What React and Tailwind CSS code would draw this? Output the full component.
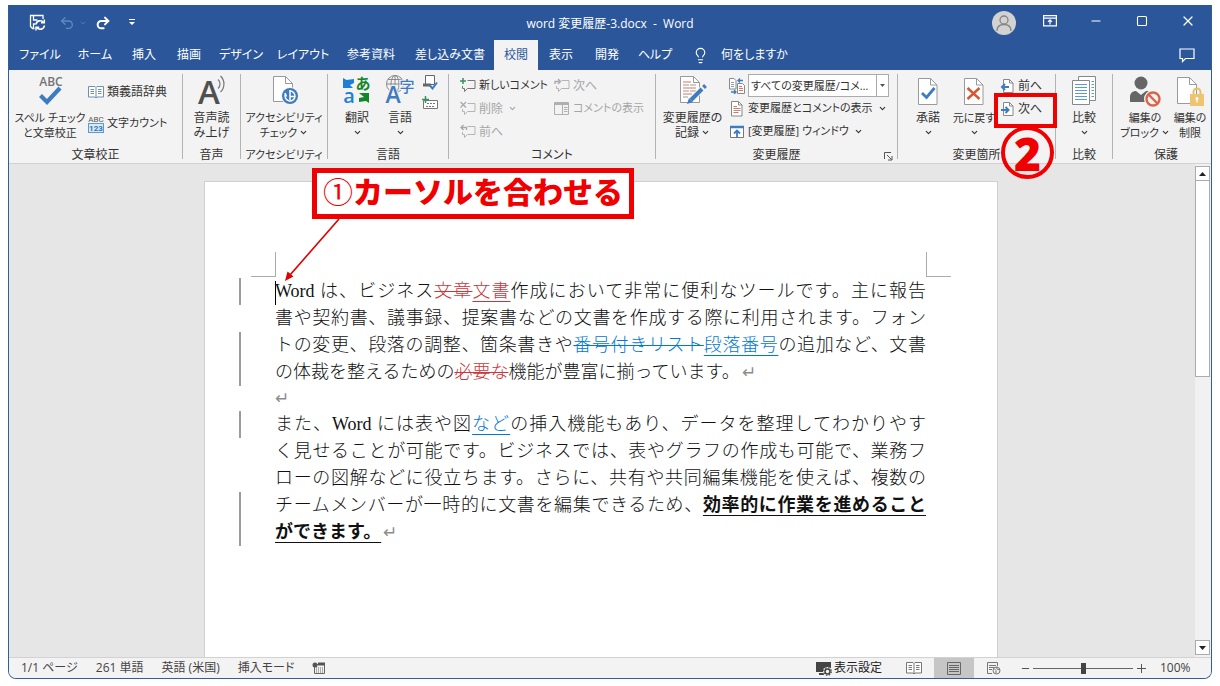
import React, { useState } from 'react';
import { ChevronDown, Undo2, Redo2, Minus, Square, X, Lightbulb } from 'lucide-react';

const TABS = [
    { label: 'ファイル', width: 'w-[56px]' },
    { label: 'ホーム', width: 'w-[54px]' },
    { label: '挿入', width: 'w-[44px]' },
    { label: '描画', width: 'w-[46px]' },
    { label: 'デザイン', width: 'w-[58px]' },
    { label: 'レイアウト', width: 'w-[66px]' },
    { label: '参考資料', width: 'w-[70px]' },
    { label: '差し込み文書', width: 'w-[88px]' },
    { label: '校閲', width: 'w-[44px]' },
    { label: '表示', width: 'w-[46px]' },
    { label: '開発', width: 'w-[46px]' },
    { label: 'ヘルプ', width: 'w-[50px]' },
];

/* ---------- icons ---------- */

const SaveIcon = () => (
    <svg width="18" height="18" viewBox="0 0 18 18" fill="none" stroke="white" strokeWidth="1.3">
        <path d="M5.500 14.500H3.500L1.500 12.500V1.500h12.500V5M4.500 1.500V6h4M4.500 14V10h2" />
        <path d="M7 10.500a4.200 4.200 0 0 1 7.600-2M15.400 11.500a4.200 4.200 0 0 1-7.600 2" strokeWidth="1.600" />
        <path d="M15.300 5.500v3.300H12M7 16.500v-3.300h3.200" strokeWidth="1.500" />
    </svg>
);

const RibbonOptionsIcon = () => (
    <svg width="14" height="12" viewBox="0 0 14 12" fill="none" stroke="white" strokeWidth="1.2">
        <path d="M.6.6h12.8v10.2H.6zM.6 3.2h12.8M7 9.5V5M5 6.8l2-2 2 2" />
    </svg>
);

const SpeechIcon = () => (
    <svg width="16" height="15" viewBox="0 0 16 15" fill="none" stroke="white" strokeWidth="1.2">
        <path d="M1 1h14v9.500H6.500L3.500 13.500v-3H1z" />
    </svg>
);

const SpellIcon = () => (
    <svg width="34" height="34" viewBox="0 0 34 34" className="overflow-visible">
        <text x="18" y="12" textAnchor="middle" fontSize="12" fontWeight="600" fill="#737373" fontFamily="Open Sans, sans-serif">ABC</text>
        <path d="M7.500 21.500l6.500 6.500L27 14" fill="none" stroke="#3f7cbf" strokeWidth="4.200" />
    </svg>
);

const BookIcon = ({ color = '#6f8fb5' }) => (
    <svg width="16" height="14" viewBox="0 0 16 14" fill="none" stroke={color}>
        <path d="M.5 1.500h6.500l1 1 1-1h6.500v10.500h-6.500l-1 1-1-1H.5zM8 2.500V13" fill="#fff" />
        <path d="M2.500 4.500H6M2.500 6.500H6M2.500 8.500H6M10 4.500h3.500M10 6.500h3.500M10 8.500h3.500" />
    </svg>
);

const CountIcon = () => (
    <svg width="16" height="18" viewBox="0 0 16 18" fontFamily="Roboto, sans-serif" className="overflow-visible">
        <text x="8" y="7" textAnchor="middle" fontSize="8" fill="#555">ABC</text>
        <rect x=".5" y="8.500" width="15" height="9" fill="#dbe8f6" stroke="#5b9bd5" />
        <text x="8" y="16" textAnchor="middle" fontSize="8" fontWeight="700" fill="#2e75b6">123</text>
    </svg>
);

const ReadAloudIcon = () => (
    <svg width="32" height="32" viewBox="0 0 32 32" className="overflow-visible">
        <text x="13" y="30" textAnchor="middle" fontSize="33" fontWeight="600" fill="#505050" fontFamily="Open Sans, sans-serif">A</text>
        <path d="M22 5.500a6 6 0 0 1 0 9M24.500 2a11 11 0 0 1 0 16" fill="none" stroke="#777" strokeWidth="1.200" />
    </svg>
);

const AccessibilityIcon = () => (
    <svg width="32" height="32" viewBox="0 0 32 32" fill="none">
        <path d="M5.500 2.500h12l7 7v18h-19z" fill="#fff" stroke="#9a9a9a" />
        <path d="M17.500 2.500v7h7" stroke="#9a9a9a" />
        <circle cx="22" cy="22" r="9" fill="#f3f3f3" />
        <circle cx="22" cy="22" r="8" fill="#3f7cbf" />
        <path d="M22 17a5 5 0 1 1-4.700 3.300" stroke="#fff" strokeWidth="1.500" />
        <path d="M22 16v6.500h5M17 19l1.500 3.500M22 22.500V26" stroke="#fff" strokeWidth="1.500" />
    </svg>
);

const TranslateIcon = () => (
    <svg width="30" height="32" viewBox="0 0 30 32" fontFamily="Noto Sans CJK JP, sans-serif" className="overflow-visible">
        <path d="M1 4l3.500 2 7.500-1v4L8 11l3 3H1z" fill="#1e7fd6" />
        <text x="21" y="15" textAnchor="middle" fontSize="15" fontWeight="700" fill="#14862a">あ</text>
        <text x="7" y="29" textAnchor="middle" fontSize="20" fontWeight="600" fill="#1e7fd6" fontFamily="Open Sans, sans-serif">a</text>
        <path d="M17 19h10v10l-3-2-7 1v-4l5-1z" fill="#14862a" />
    </svg>
);

const LanguageIcon = () => (
    <svg width="32" height="32" viewBox="0 0 32 32" className="overflow-visible">
        <g fill="none" stroke="#8a8a8a">
            <circle cx="11" cy="10" r="8.500" />
            <ellipse cx="11" cy="10" rx="4" ry="8.500" />
            <path d="M2.500 10h17M4 5.500h14M11 1.500v17" />
        </g>
        <text x="9" y="29" textAnchor="middle" fontSize="23" fontWeight="600" fill="#3f7cbf" stroke="#f3f3f3" strokeWidth="2" paintOrder="stroke" fontFamily="Open Sans, sans-serif">A</text>
        <text x="23" y="18" textAnchor="middle" fontSize="15" fontWeight="500" fill="#3f7cbf" stroke="#f3f3f3" strokeWidth="2" paintOrder="stroke" fontFamily="Noto Sans CJK JP, sans-serif">字</text>
    </svg>
);

const ProofLangIcon = () => (
    <svg width="16" height="16" viewBox="0 0 16 16" fill="none">
        <path d="M3.500 1.500h9v9h-9z" fill="#fff" stroke="#666" />
        <path d="M1 9.500h8v3H1z" fill="#666" />
        <path d="M7.500 11l3 3.500 4.500-6" stroke="#3f7cbf" strokeWidth="2" />
    </svg>
);

const ImeIcon = () => (
    <svg width="16" height="14" viewBox="0 0 16 14" fill="none">
        <path d="M1.500 4.500h14v8h-14z" fill="#fff" stroke="#777" />
        <path d="M5 7.500h9M4 10.500h9" stroke="#777" strokeDasharray="2 1" />
        <path d="M3.500 0v7M0 3.500h7" stroke="#3a9160" strokeWidth="1.500" />
    </svg>
);

const CommentIcon = ({ kind }) => (
    <svg width="16" height="16" viewBox="0 0 16 16" fill="none">
        <path d="M7.500 2.500h7.500v8H7.500L4.500 13.500v-3H2.500V8" stroke={kind === 'new' ? '#777' : '#b5b5b5'} />
        {kind === 'new' && <path d="M3 0v6M0 3h6" stroke="#3a9160" strokeWidth="1.500" />}
        {kind === 'delete' && <path d="M.5 1l5.500 5.500M6 1L.5 6.500" stroke="#a8a8a8" strokeWidth="1.300" />}
        {kind === 'prev' && <path d="M6.500 6V3.500H1M3.500 1L1 3.500 3.500 6" stroke="#a8a8a8" strokeWidth="1.300" />}
        {kind === 'next' && <path d="M1 6V3.500h5.500M4 1l2.500 2.500L4 6" stroke="#a8a8a8" strokeWidth="1.300" />}
    </svg>
);

const ShowCommentsIcon = () => (
    <svg width="16" height="16" viewBox="0 0 16 16" fill="none" stroke="#b0b0b0">
        <path d="M.5 1.500h14v12H.5z" />
        <path d="M.5 3h14" strokeWidth="2" />
        <path d="M8.500 4v9.500M10 6.500h3.500M10 8.500h3.500M10 10.500h3.500" />
    </svg>
);

const TrackIcon = () => (
    <svg width="32" height="32" viewBox="0 0 32 32" fill="none">
        <path d="M3.500 2.500h13l6 6v20h-19z" fill="#fff" stroke="#9a9a9a" />
        <path d="M16.500 2.500v6h6" stroke="#9a9a9a" />
        <path d="M6 8h8M6 14h13M6 20h9" stroke="#e0735c" />
        <path d="M6 11h13M6 17h13M6 23h5" stroke="#999" strokeDasharray="6 1" />
        <path d="M14 26L26 14" stroke="#f3f3f3" strokeWidth="6" />
        <path d="M14 26L25 15M26.500 13.500l2-2" stroke="#3f7cbf" strokeWidth="4" />
        <path d="M12 24l-2 6 6-2z" fill="#3f7cbf" />
    </svg>
);

const CompareDocsIcon = () => (
    <svg width="16" height="16" viewBox="0 0 16 16" fill="none">
        <path d="M.5.5h4.500l2 2v8.500H.5zM8.500 5.500h5l2 2v8h-7z" fill="#fff" stroke="#888" />
        <path d="M2 4.500h3M2 6.500h3M2 8.500h3" stroke="#999" />
        <path d="M10 8.500h3M10 10.500h4M10 12.500h4" stroke="#e0735c" />
        <path d="M9 2.500h5M11 .5l-2 2 2 2M2 14h5M5 12l2 2-2 2" stroke="#3f7cbf" strokeWidth="1.300" />
    </svg>
);

const MarkupIcon = () => (
    <svg width="16" height="16" viewBox="0 0 16 16" fill="none">
        <path d="M2.500.500h7l3.500 3.500v11H2.500z" fill="#fff" stroke="#888" />
        <path d="M9.500.500V4H13" stroke="#888" />
        <path d="M4.500 5.500H8M4.500 7.500h7M4.500 11.500h5" stroke="#e0735c" />
        <path d="M4.500 9.500h7" stroke="#999" />
    </svg>
);

const PaneIcon = () => (
    <svg width="16" height="14" viewBox="0 0 16 14" fill="none">
        <path d="M1.500 1.500h13v11h-13z" fill="#fff" stroke="#777" />
        <path d="M1 2h14" stroke="#3f7cbf" strokeWidth="2.500" />
        <path d="M8 12V6M5 8.500l3-3 3 3" stroke="#3f7cbf" strokeWidth="1.800" />
    </svg>
);

const PageMarkIcon = ({ kind }) => (
    <svg width="24" height="34" viewBox="0 0 24 34" fill="none">
        <path d="M2.500 4.500h12l6.500 6.500v19.500H2.500z" fill="#fff" stroke="#9a9a9a" />
        <path d="M14.500 4.500V11H21" stroke="#9a9a9a" />
        {kind === 'accept'
            ? <path d="M6 19l4.500 4.500L18.500 14" stroke="#3f7cbf" strokeWidth="2.800" />
            : <path d="M5.500 14l12 11M17.500 14l-12 11" stroke="#d65532" strokeWidth="2.400" />}
    </svg>
);

const PageArrowIcon = ({ back }) => (
    <svg width="15" height="16" viewBox="0 0 15 16" fill="none">
        <path d="M3.500 1.500h6L13 5v9.500H3.500z" fill="#fff" stroke="#888" />
        <path d="M9.500 1.500V5H13" stroke="#888" />
        {back
            ? <path d="M9 9H2M5 6L2 9l3 3" stroke="#3f7cbf" strokeWidth="2" />
            : <path d="M1 9h7M5.500 6l3 3-3 3" stroke="#3f7cbf" strokeWidth="2" />}
    </svg>
);

const CompareIcon = () => (
    <svg width="26" height="34" viewBox="0 0 26 34" fill="none">
        <path d="M7.500 2.500h17v24h-17z" fill="#fff" stroke="#888" />
        <path d="M1.500 6.500h17v24h-17z" fill="#fff" stroke="#888" />
        <path d="M4 10.500h12M4 13.500h12M4 16.500h12M4 19.500h12M4 22.500h12M4 25.500h12M20.500 7.500H23M20.500 10.500H23M20.500 13.500H23M20.500 16.500H23M20.500 19.500H23M20.500 22.500H23" stroke="#5b9bd5" />
    </svg>
);

const BlockAuthorsIcon = () => (
    <svg width="34" height="34" viewBox="0 0 34 34" fill="none">
        <circle cx="13" cy="9" r="6.500" fill="#666" />
        <path d="M2 28v-5c0-4 3-6 6-6l5 4 5-4c4 0 6 2 6 6v5z" fill="#666" />
        <circle cx="25" cy="25" r="9" fill="#f3f3f3" />
        <circle cx="25" cy="25" r="6.500" stroke="#d9664c" strokeWidth="2.400" />
        <path d="M20.500 20.500l9 9" stroke="#d9664c" strokeWidth="2.400" />
    </svg>
);

const RestrictIcon = () => (
    <svg width="28" height="34" viewBox="0 0 28 34" fill="none">
        <path d="M1.500 3.500h12l7 7v19h-19z" fill="#fff" stroke="#9a9a9a" />
        <path d="M13.500 3.500v7h7" stroke="#9a9a9a" />
        <path d="M17.500 21v-3a3.500 3.500 0 0 1 7 0v3" stroke="#e8bf6a" strokeWidth="2" />
        <rect x="14" y="20" width="14" height="12" fill="#edc472" />
        <circle cx="21" cy="24.500" r="1.500" fill="#fff" />
        <path d="M21 24.500v4" stroke="#fff" strokeWidth="1.300" />
    </svg>
);

const LauncherIcon = () => (
    <svg width="9" height="9" viewBox="0 0 9 9" fill="none" stroke="#555">
        <path d="M.5 7V.5H7M3 3l4.500 4.500M8 4v4H4" />
    </svg>
);

const MacroIcon = () => (
    <svg width="14" height="13" viewBox="0 0 14 13" fill="none">
        <path d="M2.500 2.500h10v9h-10z" stroke="#666" />
        <path d="M6 2h7" stroke="#555" strokeWidth="3" />
        <path d="M4 6h8M4 8h8M4 10h8" stroke="#666" strokeDasharray="1 1" />
        <circle cx="3" cy="3" r="2.500" fill="#555" />
    </svg>
);

const DisplaySettingsIcon = () => (
    <svg width="16" height="15" viewBox="0 0 16 15">
        <path d="M0 1h15v10H0zM3 12h5v2H3z" fill="#444" />
        <circle cx="11.500" cy="10.500" r="4.500" fill="#f3f3f3" />
        <circle cx="11.500" cy="10.500" r="2.500" fill="none" stroke="#444" strokeWidth="1.500" />
        <circle cx="11.500" cy="10.500" r="3.800" fill="none" stroke="#444" strokeWidth="1.200" strokeDasharray="1.500 1.500" />
    </svg>
);

const PrintLayoutIcon = () => (
    <svg width="14" height="13" viewBox="0 0 14 13" fill="none" stroke="#666">
        <path d="M.5.5h13v12H.5zM2 3.500h10M2 5.500h10M2 7.500h10M2 9.500h10" />
    </svg>
);

const WebLayoutIcon = () => (
    <svg width="14" height="13" viewBox="0 0 14 13" fill="none" stroke="#777">
        <path d="M5 11.500H.5V.5h10V4M2 3.500h7M2 5.500h5M2 7.500h3" />
        <circle cx="9.500" cy="8.500" r="3.500" />
        <path d="M7 6.500l2 2v3M9 5l1 2 3 1" />
    </svg>
);

/* ---------- ribbon parts ---------- */

const Arrow = () => <ChevronDown size={9} strokeWidth={3} className="shrink-0" />;

const Group = ({ label, width, small, launcher, children }) => (
    <>
        <section className={`relative flex shrink-0 flex-col ${width}`}>
            <div className="flex h-[77px] pt-1">{children}</div>
            <div className={`flex h-4 items-center justify-center whitespace-nowrap leading-4 ${small ? 'text-[11px]' : ''}`}>{label}</div>
            {launcher && (
                <button aria-label="変更履歴オプション" className="absolute right-0.5 bottom-0 p-0.5"><LauncherIcon /></button>
            )}
        </section>
        <div className="my-1 w-px shrink-0 bg-[#b4b4b4]" />
    </>
);

const BigButton = ({ icon, lines, width, arrow, small }) => (
    <button className={`flex shrink-0 flex-col items-center justify-start whitespace-nowrap leading-[15px] ${width} ${small ? 'text-[11px]' : ''}`}>
        <span className="flex h-9 items-start">{icon}</span>
        {lines.map((line, i) => (
            <span key={line} className="flex h-[15px] items-center gap-0.5">
                {line}
                {arrow && lines.length > 1 && i === lines.length - 1 && <Arrow />}
            </span>
        ))}
        {arrow && lines.length === 1 && <span className="flex h-[15px] items-center"><Arrow /></span>}
    </button>
);

const SmallButton = ({ icon, label, arrow, disabled, small }) => (
    <button disabled={disabled} className={`flex h-[23px] items-center gap-[3px] whitespace-nowrap disabled:text-[#a6a6a6] ${small ? 'text-[11px]' : ''}`}>
        <span className="shrink-0">{icon}</span>
        <span>{label}</span>
        {arrow && <span className="ml-0.5"><Arrow /></span>}
    </button>
);

const TitleBar = () => (
    <div className="flex h-[35px] items-stretch text-white">
        <div className="flex flex-1 items-center">
            <button aria-label="上書き保存" className="ml-5"><SaveIcon /></button>
            <button aria-label="元に戻す" className="ml-3 flex items-center gap-1 text-[#6288c0]">
                <Undo2 size={16} strokeWidth={2} />
                <ChevronDown size={8} />
            </button>
            <button aria-label="やり直し" className="ml-2"><Redo2 size={16} strokeWidth={3} /></button>
            <button aria-label="クイック アクセス ツール バーのカスタマイズ" className="ml-[18px]">
                <svg width="6" height="7" viewBox="0 0 6 7" fill="white"><path d="M0 0h6v1H0zM0 3h6L3 6z" /></svg>
            </button>
        </div>
        <h1 className="self-center pt-0.5 text-[12px] whitespace-pre">{'word 変更履歴-3.docx  -  Word'}</h1>
        <div className="flex flex-1 justify-end">
            <button aria-label="アカウント" className="flex w-[46px] items-center justify-center">
                <svg width="24" height="24" viewBox="0 0 24 24" fill="none" stroke="#858585" strokeWidth="1.300">
                    <circle cx="12" cy="12" r="12" fill="#d2d2d2" stroke="none" />
                    <circle cx="12" cy="9" r="4" />
                    <path d="M5 20c0-4.500 3-6.500 7-6.500s7 2 7 6.500" />
                </svg>
            </button>
            <button aria-label="リボンの表示オプション" className="flex w-[46px] items-center justify-center pb-1"><RibbonOptionsIcon /></button>
            <button aria-label="最小化" className="flex w-[46px] items-center justify-center pb-1"><Minus size={14} strokeWidth={1.8} /></button>
            <button aria-label="最大化" className="flex w-[46px] items-center justify-center pb-1"><Square size={12} strokeWidth={2.2} /></button>
            <button aria-label="閉じる" className="flex w-[46px] items-center justify-center pb-1"><X size={16} strokeWidth={1.8} /></button>
        </div>
    </div>
);

const TabRow = ({ active, onSelect }) => (
    <nav className="flex h-[30px] items-stretch pl-[3px] text-white">
        {TABS.map(({ label, width }) => (
            <button
                key={label}
                onClick={() => onSelect(label)}
                className={`shrink-0 text-center whitespace-nowrap ${width} ${label === active ? 'bg-[#f3f3f3] text-[#2b579a]' : ''}`}
            >
                {label}
            </button>
        ))}
        <button className="ml-3 flex items-center gap-3 whitespace-nowrap">
            <Lightbulb size={17} strokeWidth={1.6} />
            何をしますか
        </button>
        <button aria-label="コメント" className="mr-4 ml-auto"><SpeechIcon /></button>
    </nav>
);

const Ribbon = () => (
    <div className="flex h-[94px] border-b border-[#d2d2d2] bg-[#f3f3f3] text-[#333]">
        <Group label="文章校正" width="w-[173px]">
            <BigButton small width="w-[82px]" icon={<SpellIcon />} lines={['スペル チェック', 'と文章校正']} />
            <div className="-ml-[3px] flex flex-col gap-[9px] pt-[6px]">
                <SmallButton icon={<BookIcon />} label="類義語辞典" />
                <SmallButton small icon={<CountIcon />} label="文字カウント" />
            </div>
        </Group>
        <Group label="音声" width="w-[57px]">
            <BigButton width="w-full" icon={<ReadAloudIcon />} lines={['音声読', 'み上げ']} />
        </Group>
        <Group small label="アクセシビリティ" width="w-[86px]">
            <BigButton small width="w-full" icon={<AccessibilityIcon />} lines={['アクセシビリティ', 'チェック']} arrow />
        </Group>
        <Group label="言語" width="w-[120px]">
            <BigButton width="w-[50px] ml-1" icon={<TranslateIcon />} lines={['翻訳']} arrow />
            <BigButton width="w-[36px]" icon={<LanguageIcon />} lines={['言語']} arrow />
            <div className="ml-1 flex flex-col gap-1.5">
                <button aria-label="校正言語"><ProofLangIcon /></button>
                <button aria-label="言語の設定"><ImeIcon /></button>
            </div>
        </Group>
        <Group label="コメント" width="w-[206px]">
            <div className="w-[94px] shrink-0 pl-[11px]">
                <SmallButton small icon={<CommentIcon kind="new" />} label="新しいコメント" />
                <SmallButton icon={<CommentIcon kind="delete" />} label="削除" arrow disabled />
                <SmallButton icon={<CommentIcon kind="prev" />} label="前へ" disabled />
            </div>
            <div className="pl-[11px]">
                <SmallButton icon={<CommentIcon kind="next" />} label="次へ" disabled />
                <SmallButton small icon={<ShowCommentsIcon />} label="コメントの表示" disabled />
            </div>
        </Group>
        <Group label="変更履歴" width="w-[241px]" launcher>
            <BigButton width="w-[73px]" icon={<TrackIcon />} lines={['変更履歴の', '記録']} arrow />
            <div>
                <div className="flex h-[23px] items-center gap-[3px]">
                    <CompareDocsIcon />
                    <div className="relative h-[23px] w-[141px] border border-[#ababab] bg-white">
                        <select aria-label="変更内容の表示" className="h-full w-full appearance-none pr-3 pl-0.5 text-[11px] leading-[20px]">
                            <option>すべての変更履歴/コメ…</option>
                        </select>
                        <span className="pointer-events-none absolute inset-y-0 right-0 flex w-3 items-center justify-center border-l border-[#ababab]">
                            <svg width="5" height="3" viewBox="0 0 5 3" fill="#555"><path d="M0 0h5L2.500 3z" /></svg>
                        </span>
                    </div>
                </div>
                <SmallButton small icon={<MarkupIcon />} label="変更履歴とコメントの表示" arrow />
                <SmallButton small icon={<PaneIcon />} label="[変更履歴] ウィンドウ" arrow />
            </div>
        </Group>
        <Group label="変更箇所" width="w-[157px]">
            <BigButton width="w-[52px] ml-1" icon={<PageMarkIcon kind="accept" />} lines={['承諾']} arrow />
            <BigButton small width="w-[40px]" icon={<PageMarkIcon kind="reject" />} lines={['元に戻す']} arrow />
            <div className="ml-1.5">
                <SmallButton icon={<PageArrowIcon back />} label="前へ" />
                <SmallButton icon={<PageArrowIcon />} label="次へ" />
            </div>
            {/* step 2 marker */}
            <div className="pointer-events-none absolute top-[23px] left-[96px] h-[35px] w-[63px] border-4 border-[#f00000]" />
            <div className="pointer-events-none absolute top-[56px] left-[103px] z-20 flex size-[53px] items-center justify-center rounded-full border-4 border-[#f00000] text-[46px] leading-none font-black text-[#f00000]">
                2
            </div>
        </Group>
        <Group label="比較" width="w-[56px]">
            <BigButton width="w-full" icon={<CompareIcon />} lines={['比較']} arrow />
        </Group>
        <section className="flex flex-1 flex-col">
            <div className="flex h-[77px] pt-1 pl-2">
                <BigButton small width="w-[48px]" icon={<BlockAuthorsIcon />} lines={['編集の', 'ブロック']} arrow />
                <BigButton small width="w-[42px]" icon={<RestrictIcon />} lines={['編集の', '制限']} />
            </div>
            <div className="flex h-4 items-center justify-center pl-2">保護</div>
        </section>
    </div>
);

/* ---------- document ---------- */

const Line = ({ changed, last, children }) => (
    <span className={`flex h-[27px] items-center border-l-2 ${changed ? 'border-[#9c9c9c]' : 'border-transparent'}`}>
        <span className={`ml-[34px] block w-full leading-[27px] whitespace-nowrap ${last ? '' : 'text-justify [text-align-last:justify]'}`}>{children}</span>
    </span>
);

const Ret = () => <span className="ml-0.5 text-[17px] text-[#8c8c8c]">↵</span>;

const Document = () => (
    <article className="w-[794px] max-w-full border border-b-0 border-[#d0d0d0] bg-white pt-[70px] font-['Liberation_Serif','Noto_Sans_CJK_JP',serif] text-[18px] font-light text-[#111]">
        <div className="flex justify-between px-[46px]">
            <div className="h-[25px] w-[25px] border-r border-b border-[#ababab]" />
            <div className="h-[25px] w-[25px] border-b border-l border-[#ababab]" />
        </div>
        <div className="pt-px pr-[71px] pl-[34px]">
            <p>
                <Line changed>
                    <span className="-mr-px inline-block h-6 w-px bg-black align-middle" />
                    Word は、ビジネス<del className="text-[#d13438]">文章</del><ins className="text-[#d13438] underline-offset-4">文書</ins>作成において非常に便利なツールです。主に報告
                </Line>
                <Line>書や契約書、議事録、提案書などの文書を作成する際に利用されます。フォン</Line>
                <Line changed>
                    トの変更、段落の調整、箇条書きや<del className="text-[#0078d4]">番号付きリスト</del><ins className="text-[#0078d4] underline-offset-4">段落番号</ins>の追加など、文書
                </Line>
                <Line changed last>
                    の体裁を整えるための<del className="text-[#d13438]">必要な</del>機能が豊富に揃っています。<Ret />
                </Line>
            </p>
            <p className="h-[25px] pl-[34px] leading-[25px]"><Ret /></p>
            <p>
                <Line changed>
                    また、Word には表や図<ins className="text-[#0078d4] underline-offset-4">など</ins>の挿入機能もあり、データを整理してわかりやす
                </Line>
                <Line>く見せることが可能です。ビジネスでは、表やグラフの作成も可能で、業務フ</Line>
                <Line>ローの図解などに役立ちます。さらに、共有や共同編集機能を使えば、複数の</Line>
                <Line changed>
                    チームメンバーが一時的に文書を編集できるため、<b className="font-bold underline decoration-1 underline-offset-4">効率的に作業を進めること</b>
                </Line>
                <Line changed last>
                    <b className="font-bold underline decoration-1 underline-offset-4">ができます。</b><Ret />
                </Line>
            </p>
        </div>
    </article>
);

const ScrollBar = () => (
    <div className="flex w-4 shrink-0 flex-col bg-[#f1f1f1] py-[2px] pr-px">
        <button aria-label="上へスクロール" className="flex h-[15px] items-center justify-center border border-[#ababab] bg-white">
            <svg width="7" height="4" viewBox="0 0 7 4" fill="#222"><path d="M0 4h7L3.500 0z" /></svg>
        </button>
        <div className="h-2/5 border border-t-0 border-[#ababab] bg-white" />
        <button aria-label="下へスクロール" className="mt-auto flex h-[15px] items-center justify-center border border-[#ababab] bg-white">
            <svg width="7" height="4" viewBox="0 0 7 4" fill="#222"><path d="M0 0h7L3.500 4z" /></svg>
        </button>
    </div>
);

const StatusBar = ({ zoom, onZoom }) => (
    <footer className="flex h-[21px] shrink-0 items-stretch border-t border-[#d2d2d2] bg-[#f3f3f3] pl-3 whitespace-nowrap text-[#444]">
        <div className="flex items-center gap-[18px]">
            <span>1/1 ページ</span>
            <span>261 単語</span>
            <span>英語 (米国)</span>
            <span>挿入モード</span>
            <button aria-label="マクロの記録"><MacroIcon /></button>
        </div>
        <div className="ml-auto flex items-stretch">
            <button className="mr-3 flex items-center gap-0.5 text-[#222]"><DisplaySettingsIcon />表示設定</button>
            <button aria-label="閲覧モード" className="flex w-10 items-center justify-center"><BookIcon color="#777" /></button>
            <button aria-label="印刷レイアウト" className="flex w-10 items-center justify-center bg-[#c6c6c6]"><PrintLayoutIcon /></button>
            <button aria-label="Web レイアウト" className="flex w-10 items-center justify-center"><WebLayoutIcon /></button>
            <button aria-label="縮小" className="ml-1 flex w-[15px] items-center justify-center"><Minus size={11} /></button>
            <input
                type="range"
                aria-label="ズーム"
                min="0"
                max="200"
                value={zoom}
                onChange={(e) => onZoom(Number(e.target.value))}
                className="h-full w-[100px] appearance-none bg-transparent [&::-webkit-slider-runnable-track]:h-px [&::-webkit-slider-runnable-track]:bg-[#666] [&::-webkit-slider-thumb]:-mt-[5px] [&::-webkit-slider-thumb]:h-[11px] [&::-webkit-slider-thumb]:w-[5px] [&::-webkit-slider-thumb]:appearance-none [&::-webkit-slider-thumb]:bg-[#444]"
            />
            <button aria-label="拡大" className="flex w-[17px] items-center justify-center">
                <svg width="9" height="9" viewBox="0 0 9 9" stroke="#555"><path d="M0 4.500h9M4.500 0v9" /></svg>
            </button>
            <span className="flex w-[61px] items-center pl-[10px]">{zoom}%</span>
        </div>
    </footer>
);

const App = () => {
    const [activeTab, setActiveTab] = useState('校閲');
    const [zoom, setZoom] = useState(100);

    return (
        <div lang="ja" className="h-screen bg-white px-2 pt-[5px] pb-[7px] font-['Open_Sans','Noto_Sans_CJK_JP',sans-serif] text-[12px] [font-feature-settings:'palt']">
            <div className="flex h-full flex-col overflow-hidden rounded-b-lg border border-t-0 border-[#2f5f97] bg-[#e6e6e6]">
                <header className="shrink-0">
                    <div className="bg-[#2b579a]">
                        <TitleBar />
                        <TabRow active={activeTab} onSelect={setActiveTab} />
                    </div>
                    <Ribbon />
                </header>
                <main className="relative flex min-h-0 flex-1">
                    <div className="flex min-w-0 flex-1 justify-center overflow-hidden pt-[17px] pr-0.5 [font-feature-settings:normal]">
                        <Document />
                    </div>
                    <ScrollBar />
                    {/* step 1 marker */}
                    <div className="absolute top-1 left-[303px] flex h-[51px] items-center border-[5px] border-[#f00000] bg-white px-1.5 pb-1 text-[30px] leading-none font-black whitespace-nowrap text-[#f00000] [font-feature-settings:normal]">
                        <span className="font-normal">①</span>カーソルを合わせる
                    </div>
                    <svg className="pointer-events-none absolute top-[55px] left-[270px]" width="70" height="66" viewBox="0 0 70 66">
                        <path d="M60 0L11 56" stroke="#e00000" strokeWidth="1.600" />
                        <path d="M6 62l2.500-9.500 6 5z" fill="#e00000" />
                    </svg>
                </main>
                <StatusBar zoom={zoom} onZoom={setZoom} />
            </div>
        </div>
    );
};

export default App;
